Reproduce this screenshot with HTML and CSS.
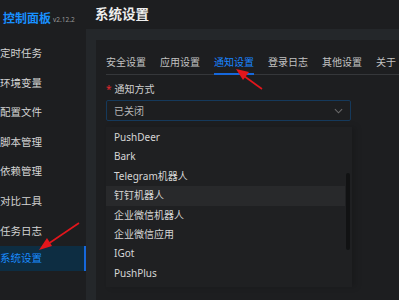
FILE: index.html
```html
<!DOCTYPE html>
<html lang="zh-CN">
<head>
    <meta charset="UTF-8">
    <title>系统设置</title>
    <link rel="stylesheet" href="styles.css">
</head>
<body>
    <div class="app">
        <aside class="sidebar">
            <div class="logo">
                <span class="logo-title">控制面板</span>
                <span class="logo-version">v2.12.2</span>
            </div>
            <ul class="menu">
                <li class="menu-item">定时任务</li>
                <li class="menu-item">环境变量</li>
                <li class="menu-item">配置文件</li>
                <li class="menu-item">脚本管理</li>
                <li class="menu-item">依赖管理</li>
                <li class="menu-item">对比工具</li>
                <li class="menu-item">任务日志</li>
                <li class="menu-item active">系统设置</li>
            </ul>
        </aside>

        <main class="main">
            <header class="page-header">系统设置</header>
            <div class="content">
                <section class="card">
                    <nav class="tabs">
                        <span class="tab">安全设置</span>
                        <span class="tab">应用设置</span>
                        <span class="tab active">通知设置</span>
                        <span class="tab">登录日志</span>
                        <span class="tab">其他设置</span>
                        <span class="tab">关于</span>
                    </nav>

                    <div class="form-item">
                        <label class="form-label"><span class="required">*</span>通知方式</label>
                        <div class="select">
                            <span class="select-value">已关闭</span>
                            <svg class="select-arrow" viewBox="0 0 10 6" width="9" height="6">
                                <path d="M1 1l4 4 4-4" fill="none" stroke="currentColor" stroke-width="1.2"/>
                            </svg>
                        </div>
                    </div>

                    <div class="dropdown">
                        <ul class="options">
                            <li class="option">PushDeer</li>
                            <li class="option">Bark</li>
                            <li class="option">Telegram机器人</li>
                            <li class="option hover">钉钉机器人</li>
                            <li class="option">企业微信机器人</li>
                            <li class="option">企业微信应用</li>
                            <li class="option">IGot</li>
                            <li class="option">PushPlus</li>
                        </ul>
                        <div class="scrollbar"></div>
                    </div>
                </section>
            </div>
        </main>
    </div>

    <!-- annotation arrows -->
    <svg class="annotations" width="399" height="300" viewBox="0 0 399 300">
        <line x1="79" y1="223" x2="48" y2="244" stroke="#e3161c" stroke-width="1.6"/>
        <polygon points="39,250 47,238 52,246" fill="#e3161c"/>
        <line x1="262" y1="89" x2="244" y2="76" stroke="#e3161c" stroke-width="1.6"/>
        <polygon points="236,69 249,72 243,80" fill="#e3161c"/>
    </svg>
</body>
</html>
```

FILE: styles.css
```css
* {
    margin: 0;
    padding: 0;
    box-sizing: border-box;
}

body {
    font-family: "Noto Sans", "Noto Sans CJK SC", sans-serif;
    background: #1d1e20;
    color: #d9d9d9;
    width: 399px;
    height: 300px;
    overflow: hidden;
    position: relative;
}

.app {
    display: flex;
    height: 300px;
}

/* sidebar */

.sidebar {
    width: 86px;
    flex-shrink: 0;
    background: #1d1e20;
}

.logo {
    height: 36px;
    display: flex;
    align-items: center;
    padding-left: 3px;
    gap: 2px;
}

.logo-title {
    color: #1890ff;
    font-size: 12px;
    font-weight: 700;
}

.logo-version {
    color: #9a9a9a;
    font-size: 6.5px;
    margin-top: 3px;
}

.menu {
    list-style: none;
    padding-top: 3px;
}

.menu-item {
    height: 29.6px;
    line-height: 29.6px;
    font-size: 10.5px;
    color: #d4d4d4;
    white-space: nowrap;
}

.menu-item.active {
    background: #0d2d42;
    color: #1a8cff;
    border-right: 2px solid #1668dc;
    height: 25px;
    line-height: 25px;
}

/* main */

.main {
    flex: 1;
    display: flex;
    flex-direction: column;
    min-width: 0;
}

.page-header {
    height: 29px;
    line-height: 29px;
    padding-left: 9px;
    font-size: 13.5px;
    font-weight: 700;
    color: #eeeeee;
    flex-shrink: 0;
}

.content {
    flex: 1;
    background: #24272a;
    padding: 11px 0 0 10px;
    display: flex;
}

.card {
    flex: 1;
    background: #1d1e20;
    padding: 12px 0 0 10px;
    position: relative;
}

.tabs {
    display: flex;
    gap: 14px;
    font-size: 10px;
    color: #c2c2c2;
    border-bottom: 1px solid #35373a;
    white-space: nowrap;
}

.tab {
    padding: 2px 0 4px;
    border-bottom: 2px solid transparent;
    margin-bottom: -1px;
}

.tab.active {
    color: #1a85ff;
    border-bottom-color: #1668dc;
}

/* form */

.form-item {
    margin-top: 6px;
    width: 245px;
}

.form-label {
    display: block;
    font-size: 10px;
    color: #d0d0d0;
    height: 16px;
    line-height: 16px;
}

.required {
    color: #e0282e;
    margin-right: 3px;
}

.select {
    margin-top: 3px;
    height: 21px;
    border: 1px solid #15395b;
    border-radius: 2px;
    display: flex;
    align-items: center;
    justify-content: space-between;
    padding: 0 7px;
}

.select-value {
    font-size: 10px;
    color: #b8b8b8;
}

.select-arrow {
    color: #6a6a6a;
}

/* dropdown */

.dropdown {
    position: absolute;
    left: 10px;
    top: 87px;
    width: 246px;
    height: 160px;
    background: #1f2022;
    box-shadow: 4px 0 6px rgba(0, 0, 0, 0.15);
    padding-top: 1px;
}

.options {
    list-style: none;
}

.option {
    height: 19.4px;
    line-height: 19.4px;
    font-size: 10px;
    color: #d6d6d6;
    padding-left: 8px;
    margin-right: 7px;
}

.option.hover {
    background: #28292b;
}

.scrollbar {
    position: absolute;
    right: 2px;
    top: 46px;
    width: 4px;
    height: 77px;
    border-radius: 2px;
    background: #111213;
}

.annotations {
    position: absolute;
    left: 0;
    top: 0;
    pointer-events: none;
}
```
